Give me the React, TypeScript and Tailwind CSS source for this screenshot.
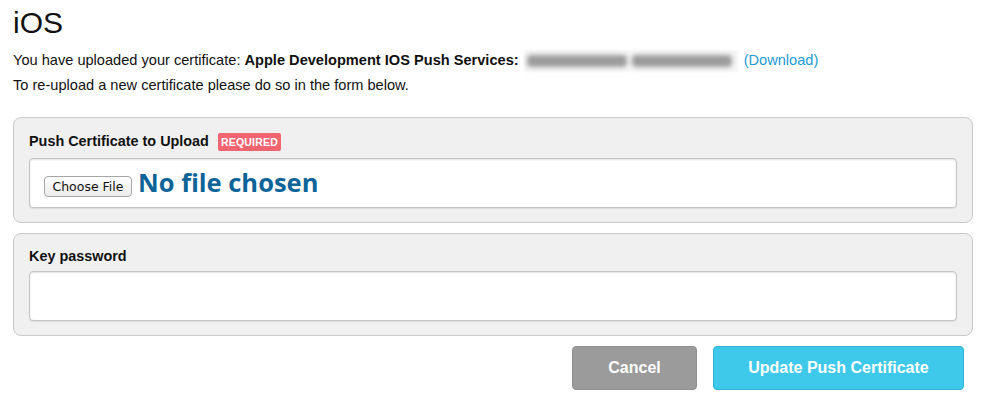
import React from 'react';

/**
 * App - iOS push certificate settings form
 */
const App: React.FC = () => {
  return (
    <div className="w-[985px] h-[415px] bg-white text-[#111] font-['Liberation_Sans',Arial,sans-serif] px-[13px] pt-[6px]">
      {/* Title */}
      <h1 className="text-[30px] leading-[34px] font-normal">iOS</h1>

      {/* Certificate info */}
      <div className="mt-[8px] text-[14.6px] leading-[25px]">
        <p className="flex items-center">
          <span>You have uploaded your certificate:&nbsp;</span>
          <span className="font-bold">Apple Development IOS Push Services:</span>
          <span className="ml-[5px] inline-flex items-center gap-[5px] w-[214px] h-[22px] px-[3px] bg-[#f6f6f6] blur-[1px]">
            <span className="h-[12px] w-[100px] rounded-[4px] bg-[#9c9c9c] blur-[2px]"></span>
            <span className="h-[12px] w-[100px] rounded-[4px] bg-[#9c9c9c] blur-[2px]"></span>
          </span>
          <a className="ml-[6px] text-[#1d9ad6]">(Download)</a>
        </p>
        <p>To re-upload a new certificate please do so in the form below.</p>
      </div>

      {/* Push certificate panel */}
      <div className="mt-[19px] w-[960px] rounded-[8px] border border-[#c9c9c9] bg-[#f0f0f0] px-[15px] pt-[15px] pb-[14px]">
        <div className="flex items-center h-[18px]">
          <span className="text-[14.4px] font-bold">Push Certificate to Upload</span>
          <span className="ml-[9px] h-[18px] w-[63px] text-center rounded-[2px] bg-[#f2646f] text-white text-[10.5px] font-bold tracking-[0.2px] leading-[18px]">REQUIRED</span>
        </div>
        <div className="mt-[7px] h-[50px] rounded-[4px] border border-[#c4c4c4] bg-white shadow-[inset_0_1px_2px_rgba(0,0,0,0.12),0_1px_1px_rgba(0,0,0,0.08)] flex items-center pl-[14px] pt-[6px]">
          <button className="h-[21px] w-[88px] rounded-[4px] border border-[#a6a6a6] bg-gradient-to-b from-white to-[#ececec] text-[12.5px] text-[#111] font-['DejaVu_Sans',sans-serif] leading-[19px]">Choose File</button>
          <span className="ml-[6px] text-[25.5px] font-bold text-[#0e6498] font-['Open_Sans',sans-serif] leading-[28px] -mt-[8px]">No file chosen</span>
        </div>
      </div>

      {/* Key password panel */}
      <div className="mt-[10px] w-[960px] rounded-[8px] border border-[#c9c9c9] bg-[#f0f0f0] px-[15px] pt-[14px] pb-[14px]">
        <div className="flex items-center h-[18px]">
          <span className="text-[14.4px] font-bold">Key password</span>
        </div>
        <input
          type="password"
          className="mt-[5px] block w-full h-[50px] rounded-[4px] border border-[#c4c4c4] bg-white shadow-[inset_0_1px_2px_rgba(0,0,0,0.12),0_1px_1px_rgba(0,0,0,0.08)] outline-none"
        />
      </div>

      {/* Actions */}
      <div className="mt-[10px] w-[951px] flex justify-end gap-[16px]">
        <button className="h-[44px] w-[125px] rounded-[4px] border border-[#8f8f8f] bg-[#9b9b9b] text-white text-[16px] font-bold">Cancel</button>
        <button className="h-[44px] w-[251px] rounded-[4px] border border-[#2fb2d6] bg-[#3ec9ea] text-white text-[16px] font-bold">Update Push Certificate</button>
      </div>
    </div>
  );
};

export default App;
